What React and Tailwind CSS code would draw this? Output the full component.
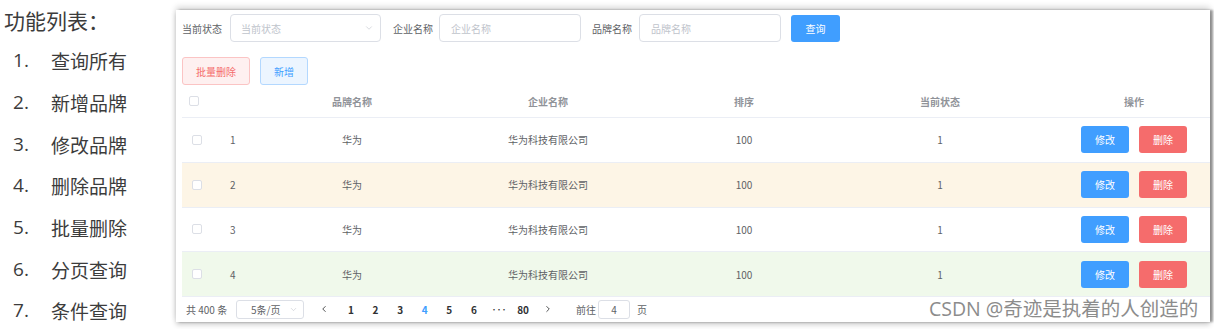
import { ChevronDown, ChevronLeft, ChevronRight } from 'lucide-react';

const features = ['查询所有', '新增品牌', '修改品牌', '删除品牌', '批量删除', '分页查询', '条件查询'];

const rows = [
  { id: 1, bg: 'bg-white' },
  { id: 2, bg: 'bg-[#fdf5e6]' },
  { id: 3, bg: 'bg-white' },
  { id: 4, bg: 'bg-[#f0f9eb]' },
];

const pages = ['1', '2', '3', '4', '5', '6', '•••', '80'];

function Checkbox() {
  return <span className="block w-[10px] h-[10px] border border-[#dcdfe6] rounded-[2px] bg-white" />;
}

export default function App() {
  return (
    <div
      className="relative w-[1214px] h-[329px] bg-white flex overflow-hidden"
      style={{ fontFamily: '"Noto Sans CJK SC", "Open Sans", sans-serif' }}
    >
      {/* 左侧功能列表 */}
      <div className="w-[176px] shrink-0 pl-[4px] text-[#3c3c3c]">
        <div className="h-[40px] flex items-center text-[21px] leading-none">功能列表：</div>
        {features.map((f, i) => (
          <div key={f} className="h-[41.7px] flex items-center text-[19px] leading-none">
            <span className="w-[47px] pl-[9px]" style={{ fontFamily: '"Open Sans", sans-serif' }}>
              {i + 1}.
            </span>
            <span>{f}</span>
          </div>
        ))}
      </div>

      {/* 右侧面板 */}
      <div className="mt-[10px] h-[312px] w-[1034px] shrink-0 bg-white overflow-hidden pl-[6px] shadow-[3px_0_2px_rgba(0,0,0,0.35),0_-3px_6px_rgba(0,0,0,0.16),0_3px_5px_rgba(0,0,0,0.18)] text-[10px] text-[#606266]">
        {/* 搜索表单 */}
        <div className="mt-[4px] h-[28px] flex items-center">
          <span className="w-[48px]">当前状态</span>
          <div className="w-[151px] h-[28px] border border-[#dcdfe6] rounded-[4px] flex items-center justify-between pl-[10px] pr-[6px] text-[#c0c4cc]">
            <span>当前状态</span>
            <ChevronDown size={10} strokeWidth={1.5} />
          </div>
          <span className="ml-[12px] w-[46px]">企业名称</span>
          <div className="w-[142px] h-[28px] border border-[#dcdfe6] rounded-[4px] flex items-center pl-[11px] text-[#c0c4cc]">企业名称</div>
          <span className="ml-[11px] w-[47px]">品牌名称</span>
          <div className="w-[142px] h-[28px] border border-[#dcdfe6] rounded-[4px] flex items-center pl-[11px] text-[#c0c4cc]">品牌名称</div>
          <button className="ml-[10px] w-[49px] h-[27px] rounded-[3px] bg-[#409eff] text-white">查询</button>
        </div>

        {/* 操作按钮 */}
        <div className="mt-[15px] h-[28px] flex gap-[10px]">
          <button className="w-[68px] h-[28px] rounded-[3px] border border-[#fbc4c4] bg-[#fef0f0] text-[#f56c6c]">批量删除</button>
          <button className="w-[48px] h-[28px] rounded-[3px] border border-[#b3d8ff] bg-[#ecf5ff] text-[#409eff]">新增</button>
        </div>

        {/* 表格 */}
        <div className="w-[1100px]">
          <div className="h-[33px] flex items-center border-b border-[#ebeef5] text-[#909399] font-semibold">
            <div className="w-[34px] pl-[7px]"><Checkbox /></div>
            <div className="w-[38px]" />
            <div className="w-[196px] text-center">品牌名称</div>
            <div className="w-[196px] text-center">企业名称</div>
            <div className="w-[196px] text-center">排序</div>
            <div className="w-[196px] text-center">当前状态</div>
            <div className="w-[192px] text-center">操作</div>
          </div>
          {rows.map((r) => (
            <div key={r.id} className={`h-[44.75px] flex items-center border-b border-[#ebeef5] ${r.bg}`}>
              <div className="w-[34px] pl-[10px]"><Checkbox /></div>
              <div className="w-[38px] pl-[14px]">{r.id}</div>
              <div className="w-[196px] text-center">华为</div>
              <div className="w-[196px] text-center">华为科技有限公司</div>
              <div className="w-[196px] text-center">100</div>
              <div className="w-[196px] text-center">1</div>
              <div className="w-[192px] flex justify-center gap-[10px]">
                <button className="w-[48px] h-[27px] rounded-[3px] bg-[#409eff] text-white">修改</button>
                <button className="w-[48px] h-[27px] rounded-[3px] bg-[#f56c6c] text-white">删除</button>
              </div>
            </div>
          ))}
        </div>

        {/* 分页 */}
        <div className="h-[24px] flex items-center">
          <span className="ml-[4px] w-[50px]">共 400 条</span>
          <div className="w-[68px] h-[19px] border border-[#dcdfe6] rounded-[3px] flex items-center justify-between pl-[14px] pr-[5px] text-[#606266]">
            <span>5条/页</span>
            <ChevronDown size={9} strokeWidth={1.5} className="text-[#c0c4cc]" />
          </div>
          <div className="ml-[8px] flex items-center text-[#303133] font-bold">
            <span className="w-[24.6px] flex justify-center"><ChevronLeft size={10} strokeWidth={2} /></span>
            <span className="ml-[2px]" />
            {pages.map((p) => (
              <span
                key={p}
                className={`w-[24.6px] text-center ${p === '4' ? 'text-[#409eff]' : ''} ${p === '•••' ? 'text-[6px] tracking-[-1px]' : ''}`}
              >
                {p}
              </span>
            ))}
            <span className="w-[24.6px] flex justify-center"><ChevronRight size={10} strokeWidth={2} /></span>
          </div>
          <span className="ml-[16px]">前往</span>
          <div className="ml-[2px] w-[32px] h-[19px] border border-[#dcdfe6] rounded-[3px] flex items-center justify-center">4</div>
          <span className="ml-[7px]">页</span>
        </div>
      </div>

      {/* 水印 */}
      <div
        className="absolute left-[929px] top-[297px] text-[19.5px] leading-[24px] text-[#8c8c8c] [text-shadow:0_0_2px_#fff,0_0_2px_#fff]"
        style={{ fontFamily: '"Open Sans", "Noto Sans CJK SC", sans-serif' }}
      >
        CSDN @奇迹是执着的人创造的
      </div>
    </div>
  );
}
